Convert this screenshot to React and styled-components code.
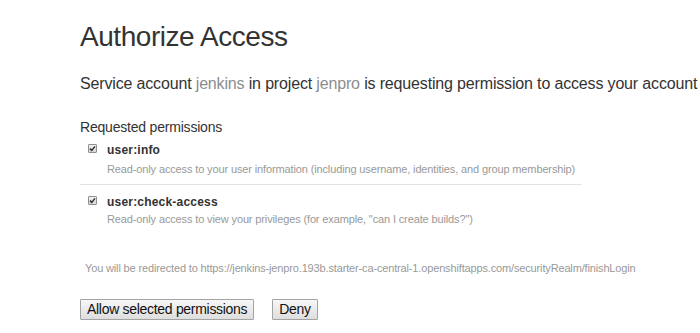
import React from "react";
import styled, { createGlobalStyle } from "styled-components";

const Global = createGlobalStyle`
  html, body { margin: 0; padding: 0; background: #fff; }
  body { font-family: "Liberation Sans", Arial, sans-serif; color: #333; }
`;

const Page = styled.div`
  padding: 18px 0 0 80px;
  width: 700px;
  box-sizing: border-box;
  overflow: hidden;
  white-space: nowrap;
`;

const Title = styled.h1`
  font-size: 28px;
  font-weight: 400;
  letter-spacing: -0.45px;
  margin: 0 0 16px;
  line-height: 38px;
  color: #333;
`;

const Lead = styled.p`
  font-size: 16px;
  letter-spacing: -0.16px;
  line-height: 24px;
  margin: 0 0 22px;
  color: #333;
`;

const Muted = styled.span`
  color: #8b8d8f;
`;

const Section = styled.h3`
  font-size: 14px;
  font-weight: 400;
  letter-spacing: -0.2px;
  margin: 0 0 6px;
  line-height: 18px;
  color: #333;
`;

const Perm = styled.div`
  display: grid;
  grid-template-columns: 9px 1fr;
  column-gap: 10px;
  padding-left: 8px;
  width: 494px;
  border-bottom: ${(p) => (p.$divider ? "1px solid #e3e3e3" : "none")};
  padding-bottom: ${(p) => (p.$divider ? "7px" : "0")};
  margin-bottom: ${(p) => (p.$divider ? "9px" : "0")};
`;

const CheckBox = styled.span`
  display: block;
  width: 9px;
  height: 9px;
  margin-top: 2px;
  box-sizing: border-box;
  border: 1px solid #8f8f8f;
  border-radius: 1px;
  background: linear-gradient(#f2f2f2, #d6d6d6);
  position: relative;
  svg {
    position: absolute;
    left: 0px;
    top: 0px;
  }
`;

const PermName = styled.div`
  font-size: 12px;
  font-weight: 700;
  line-height: 16px;
  color: #333;
  letter-spacing: 0.2px;
`;

const PermDesc = styled.div`
  grid-column: 2;
  font-size: 11px;
  letter-spacing: -0.13px;
  line-height: 16px;
  margin-top: ${(p) => p.$gap}px;
  color: #999;
`;

const Redirect = styled.div`
  font-size: 11px;
  letter-spacing: -0.15px;
  color: #999;
  margin: 34px 0 0 5px;
  line-height: 14px;
`;

const Actions = styled.div`
  display: flex;
  gap: 18px;
  margin-top: 24px;
`;

const Button = styled.button`
  font-family: "Liberation Sans", Arial, sans-serif;
  font-size: 14px;
  letter-spacing: -0.3px;
  color: #111;
  padding: 1px 6px;
  height: 21px;
  line-height: 17px;
  border: 1px solid #a3a3a3;
  border-radius: 1px;
  background: linear-gradient(#f7f7f7, #dedede);
`;

function Check() {
  return (
    <CheckBox role="checkbox" aria-checked="true">
      <svg width="7" height="7" viewBox="0 0 7 7">
        <path d="M1 3.6 L2.8 5.4 L6 1.4" fill="none" stroke="#333" strokeWidth="1.5" />
      </svg>
    </CheckBox>
  );
}

export default function App() {
  return (
    <>
      <Global />
      <Page>
        <Title>Authorize Access</Title>
        <Lead>
          Service account <Muted>jenkins</Muted> in project <Muted>jenpro</Muted> is
          requesting permission to access your account
        </Lead>
        <Section>Requested permissions</Section>
        <Perm $divider>
          <Check />
          <PermName>user:info</PermName>
          <PermDesc $gap={3}>
            Read-only access to your user information (including username, identities, and group membership)
          </PermDesc>
        </Perm>
        <Perm>
          <Check />
          <PermName>user:check-access</PermName>
          <PermDesc $gap={1}>Read-only access to view your privileges (for example, "can I create builds?")</PermDesc>
        </Perm>
        <Redirect>
          You will be redirected to https://jenkins-jenpro.193b.starter-ca-central-1.openshiftapps.com/securityRealm/finishLogin
        </Redirect>
        <Actions>
          <Button type="button">Allow selected permissions</Button>
          <Button type="button">Deny</Button>
        </Actions>
      </Page>
    </>
  );
}
